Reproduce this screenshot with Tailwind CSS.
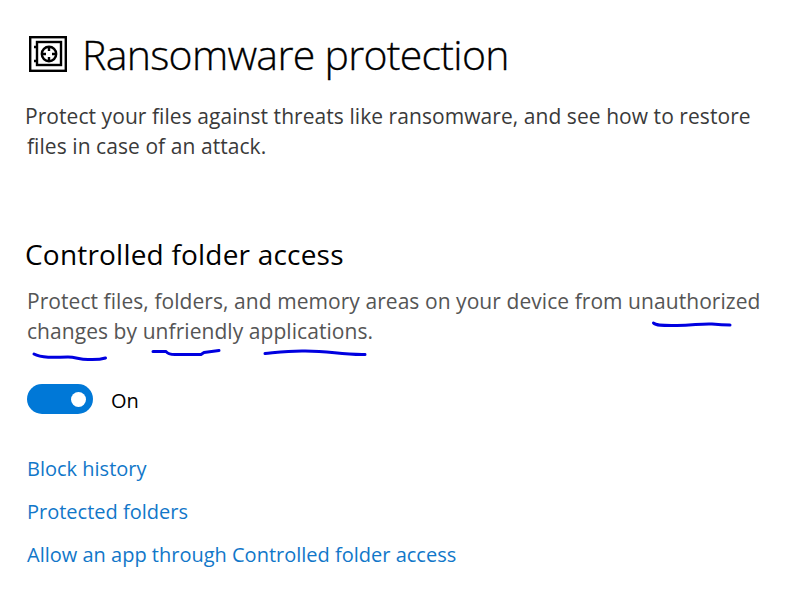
<!DOCTYPE html>
<html lang="en">
<head>
    <meta charset="UTF-8">
    <meta name="viewport" content="width=device-width, initial-scale=1.0">
    <title>Ransomware protection</title>
    <script src="https://cdn.jsdelivr.net/npm/@tailwindcss/browser@4"></script>
</head>
<body class="bg-white font-['Open_Sans','Noto_Sans',sans-serif] text-black">
    <main class="relative h-[589px] w-[795px] overflow-hidden pt-[26px] pl-[27px]">

        <!-- Page title -->
        <header class="flex h-14 items-center gap-[15px]">
            <svg class="ml-0.5 size-[38px] shrink-0" viewBox="0 0 38 38" fill="none" stroke="#000" stroke-width="2.4">
                <rect x="1.2" y="2.2" width="35.6" height="33.6" />
                <rect x="8" y="7" width="24" height="23" />
                <path d="M5 12h3M5 26h3" />
                <circle cx="20" cy="19" r="7.2" />
                <path d="M20 12v4M20 22v4M13 19h4M23 19h4" />
            </svg>
            <h1 class="text-[41px] leading-[56px] font-light tracking-[-0.7px] whitespace-nowrap [-webkit-text-stroke:0.3px_#000]">Ransomware protection</h1>
        </header>
        <p class="-ml-0.5 mt-[19px] text-[21px] leading-[30px] tracking-[0.06px] whitespace-nowrap text-[#3a3a3a]">
            <span>Protect your files against threats like ransomware, and see how to restore</span><br>
            <span class="ml-0.5">files in case of an attack.</span>
        </p>

        <!-- Controlled folder access -->
        <section class="mt-[74px]">
            <h2 class="-ml-0.5 text-[28px] leading-[38px] tracking-[0.2px] whitespace-nowrap">Controlled folder access</h2>
            <p class="mt-[13px] text-[21px] leading-[30px] tracking-[0.06px] whitespace-nowrap text-[#555]">
                <span>Protect files, folders, and memory areas on your device from unauthorized</span><br>
                <span>changes by unfriendly applications.</span>
            </p>
            <div class="mt-[38px] flex h-[30px] items-center gap-[18px]">
                <div class="flex h-[30px] w-[66px] items-center justify-end rounded-full bg-[#0078d7] pr-[7px]">
                    <div class="size-[15px] rounded-full bg-white"></div>
                </div>
                <span class="pt-[3px] text-[20px] leading-[30px]">On</span>
            </div>
        </section>

        <!-- Links -->
        <nav class="mt-10 flex flex-col items-start gap-[13px] text-[20px] leading-[30px] whitespace-nowrap text-[#1177c9]">
            <a href="#">Block history</a>
            <a href="#">Protected folders</a>
            <a href="#">Allow an app through Controlled folder access</a>
        </nav>

        <!-- Pen marks drawn over the description -->
        <svg class="pointer-events-none absolute inset-0" width="795" height="589" fill="none" stroke="#0000e0" stroke-width="3" stroke-linecap="round" stroke-linejoin="round">
            <path d="M653.500 323C656 326 666 325.500 677 325.500C693 325.500 700 323.500 712 324Q722 325 730 325" />
            <path d="M34 354C41 358 54 357.500 68 357C76 357 79 359.500 88 359.500Q99 360 105.500 358" />
            <path d="M153 351.500H166Q168 354.500 175 354.500H201L204 352.500L219 350.500" />
            <path d="M265 353.500C276 352.500 286 351 302 351C330 350.500 339 355 365 354.500" />
        </svg>
    </main>
</body>
</html>
